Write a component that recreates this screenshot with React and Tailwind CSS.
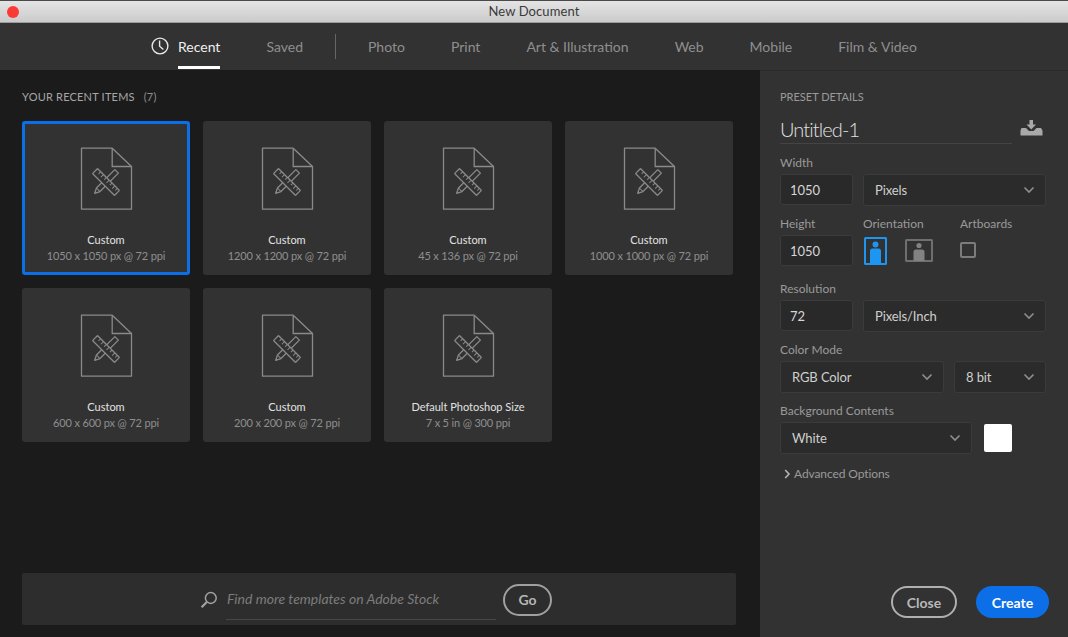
const Chevron = ({ className = "" }) => (
  <svg width="12" height="8" viewBox="0 0 12 8" fill="none" className={className}>
    <path d="M1.5 1.5 L6 6 L10.5 1.5" stroke="#8e8e8e" strokeWidth="1.6" />
  </svg>
);
const DocIcon = () => (
  <svg width="53" height="64" viewBox="0 0 53 64" fill="none" stroke="#8a8a8a" strokeWidth="1.3">
    <path d="M1.5 1.2 H32.2 L51.5 19.5 V62.2 H1.5 Z" strokeLinejoin="round" />
    <path d="M32.2 1.2 V19.5 H51.5" />
    <g transform="rotate(-45 26 35)">
      <path d="M15 32.5 H41 V37.5 H15 L10 35 Z" strokeLinejoin="round" />
      <path d="M15 32.5 V37.5" strokeWidth="1" />
    </g>
    <g transform="rotate(45 26 35)">
      <rect x="10.5" y="31.5" width="31" height="7" rx="0.6" fill="#323232" />
      <path d="M15 31.5v3M19 31.5v3.8M23 31.5v3M27 31.5v3.8M31 31.5v3M35 31.5v3.8M38.5 31.5v3" strokeWidth="1" />
    </g>
  </svg>
);
const Card = ({ title, sub, active }) => (
  <div className={`h-[154px] flex flex-col items-center bg-[#323232] rounded-[3px] ${active ? "border-[3px] border-[#0d6fe8] pt-[23px]" : "pt-[26px]"}`}>
    <DocIcon />
    <div className="text-[11px] leading-4 text-[#e2e2e2] mt-[21px]">{title}</div>
    <div className="text-[11px] tracking-[-0.15px] leading-4 text-[#8f8f8f] mt-0">{sub}</div>
  </div>
);
const Label = ({ children, className = "" }) => (
  <div className={`text-[12px] leading-4 text-[#9a9a9a] h-[19px] whitespace-nowrap ${className}`}>{children}</div>
);
const Box = ({ children, className = "" }) => (
  <div className={`h-[31px] w-[73px] flex items-center pl-[9px] pt-[3px] bg-[#292929] border border-[#3b3b3b] rounded-[3px] text-[13px] text-[#d6d6d6] ${className}`}>{children}</div>
);
const Select = ({ children, className = "" }) => (
  <div className={`h-[32px] flex items-center justify-between pl-[11px] pr-[10px] bg-[#2b2b2b] border border-[#3b3b3b] rounded-[3px] text-[13px] tracking-[-0.1px] text-[#cfcfcf] ${className}`}>
    <span className="pt-[2px]">{children}</span>
    <Chevron />
  </div>
);
const tabs = ["Photo", "Print", "Art & Illustration", "Web", "Mobile", "Film & Video"];
export default function App() {
  return (
    <div className="w-[1068px] h-[637px] overflow-hidden flex flex-col bg-[#1b1b1b]" style={{ fontFamily: 'Lato, sans-serif' }}>
      <div className="h-[23px] shrink-0 relative flex items-center justify-center bg-gradient-to-b from-[#e4e4e4] to-[#cbcbcb] border-t border-t-[#4a4a4a] border-b border-b-[#9c9c9c] text-[13px] tracking-[0.1px] text-[#3a3a3a]">
        <span className="absolute left-[7px] top-[5px] w-3 h-3 rounded-full bg-[#fc3a35]" />
        New Document
      </div>
      <div className="h-[47px] shrink-0 flex items-stretch pl-[151px] bg-[#323232] text-[14px] text-[#8f8f8f]">
        <div className="flex items-center mr-[46px]">
          <svg width="18" height="18" viewBox="0 0 18 18" fill="none" stroke="#e8e8e8" strokeWidth="1.4" className="mr-[9px] -mt-[1px]">
            <circle cx="9" cy="9" r="7.9" />
            <path d="M8.6 3.5 V9.2 L12.4 12.6" />
          </svg>
          <div className="relative h-full flex items-center text-[#efefef]">
            Recent
            <span className="absolute left-0 right-0 bottom-[1px] h-[3px] bg-white" />
          </div>
        </div>
        <div className="flex items-center">Saved</div>
        <div className="w-px h-[25px] self-center ml-[32px] mr-[32px] bg-[#666666]" />
        <div className="flex items-center gap-[46px]">
          {tabs.map((t) => <span key={t} className="whitespace-nowrap">{t}</span>)}
        </div>
      </div>
      <div className="flex-1 flex min-h-0">
        <div className="w-[760px] shrink-0 flex flex-col px-[22px] pb-[12px]">
          <div className="h-[51px] pt-[19px] text-[11px] leading-4 text-[#a6a6a6] tracking-[0.2px]">YOUR RECENT ITEMS <span className="ml-[6px] text-[#8f8f8f]">(7)</span></div>
          <div className="grid grid-cols-[168px_168px_168px_168px] gap-[13px]">
            <Card active title="Custom" sub="1050 x 1050 px @ 72 ppi" />
            <Card title="Custom" sub="1200 x 1200 px @ 72 ppi" />
            <Card title="Custom" sub="45 x 136 px @ 72 ppi" />
            <Card title="Custom" sub="1000 x 1000 px @ 72 ppi" />
            <Card title="Custom" sub="600 x 600 px @ 72 ppi" />
            <Card title="Custom" sub="200 x 200 px @ 72 ppi" />
            <Card title="Default Photoshop Size" sub="7 x 5 in @ 300 ppi" />
          </div>
          <div className="mt-auto h-[52px] w-[714px] flex items-center pl-[178px] bg-[#2d2d2d] rounded-[2px]">
            <svg width="18" height="18" viewBox="0 0 18 18" fill="none" stroke="#a3a3a3" className="mr-[8px] mt-[1px]">
              <circle cx="10.8" cy="7" r="5.4" strokeWidth="1.5" />
              <path d="M6.8 11 L1.6 16.2" strokeWidth="2.2" />
            </svg>
            <div className="w-[270px] h-[32px] mt-[9px] border-b border-[#474747] text-[14px] italic leading-[22px] pl-px text-[#7c7c7c] whitespace-nowrap">Find more templates on Adobe Stock</div>
            <div className="ml-[7px] mt-[1px] w-[49px] h-[32px] flex items-center justify-center rounded-full border-2 border-[#a0a0a0] text-[14px] font-bold text-[#b5b5b5]">Go</div>
          </div>
        </div>
        <div className="flex-1 flex flex-col bg-[#323232] border-t border-[#2a2a2a] pl-[20px] pr-[19px] pb-[19px]">
          <div className="h-[16px] mt-[18px] text-[11px] leading-4 text-[#9a9a9a] whitespace-nowrap">PRESET DETAILS</div>
          <div className="flex mt-[9px]">
            <div className="w-[232px] h-[30px] border-b border-[#444444] text-[20px] font-light tracking-[-0.9px] leading-[30px] text-[#e0e0e0]">Untitled-1</div>
            <svg width="23" height="16" viewBox="0 0 23 16" fill="#a9a9a9" className="ml-[8px] mt-[6px]">
              <path d="M9.5 0 H13 V4.5 H16 L11.3 9.5 L6.5 4.5 H9.5 Z" />
              <path d="M1.5 8 H6 L9 11 H13.5 L16.5 8 H21 L22.5 10.5 V15.5 H0.5 V10.5 Z" />
            </svg>
          </div>
          <div className="mt-[11px]">
            <Label>Width</Label>
            <div className="flex gap-[10px]">
              <Box>1050</Box>
              <Select className="w-[183px]">Pixels</Select>
            </div>
          </div>
          <div className="flex mt-[10px]">
            <div className="w-[83px]">
              <Label>Height</Label>
              <Box>1050</Box>
            </div>
            <div className="w-[97px]">
              <Label>Orientation</Label>
              <div className="flex items-start gap-[18px] mt-[2px] ml-[1px]">
                <svg width="23" height="28" viewBox="0 0 23 28" className="shrink-0">
                  <rect x="1" y="1" width="21" height="26" rx="0.5" fill="none" stroke="#1d96f3" strokeWidth="2" />
                  <circle cx="11.5" cy="7.5" r="3" fill="#1d96f3" />
                  <path d="M6 14 Q6 11.5 8.5 11.5 H14.5 Q17 11.5 17 14 V27 H6 Z" fill="#1d96f3" />
                </svg>
                <svg width="28" height="23" viewBox="0 0 28 23" className="shrink-0 mt-[2px]">
                  <rect x="1" y="1" width="26" height="21" rx="0.5" fill="none" stroke="#6f6f6f" strokeWidth="2" />
                  <circle cx="14" cy="6.5" r="2.6" fill="#828282" />
                  <path d="M8.5 13 Q8.5 10.5 11 10.5 H17 Q19.5 10.5 19.5 13 V22 H8.5 Z" fill="#828282" />
                </svg>
              </div>
            </div>
            <div>
              <Label>Artboards</Label>
              <div className="mt-[7px] w-[16px] h-[16px] rounded-[2px] border-2 border-[#7c7c7c]" />
            </div>
          </div>
          <div className="mt-[15px]">
            <Label>Resolution</Label>
            <div className="flex gap-[10px]">
              <Box>72</Box>
              <Select className="w-[183px]">Pixels/Inch</Select>
            </div>
          </div>
          <div className="mt-[10px]">
            <Label>Color Mode</Label>
            <div className="flex gap-[10px]">
              <Select className="w-[164px]">RGB Color</Select>
              <Select className="w-[92px]">8 bit</Select>
            </div>
          </div>
          <div className="mt-[10px]">
            <Label>Background Contents</Label>
            <div className="flex items-center gap-[12px]">
              <Select className="w-[192px]">White</Select>
              <div className="w-[28px] h-[28px] rounded-[2px] bg-white" />
            </div>
          </div>
          <div className="flex items-center mt-[12px] text-[12px] tracking-[-0.1px] leading-4 text-[#9a9a9a]">
            <svg width="7" height="10" viewBox="0 0 7 10" fill="none" className="ml-[4px] mr-[3px]">
              <path d="M1.2 1 L5 5 L1.2 9" stroke="#b5b5b5" strokeWidth="1.6" />
            </svg>
            Advanced Options
          </div>
          <div className="mt-auto flex justify-end gap-[19px]">
            <div className="w-[66px] h-[32px] flex items-center justify-center rounded-full border-2 border-[#b0b0b0] text-[14px] font-bold text-[#b8b8b8]">Close</div>
            <div className="w-[73px] h-[32px] flex items-center justify-center rounded-full bg-[#0d6fe8] text-[14px] font-bold text-white">Create</div>
          </div>
        </div>
      </div>
    </div>
  );
}
